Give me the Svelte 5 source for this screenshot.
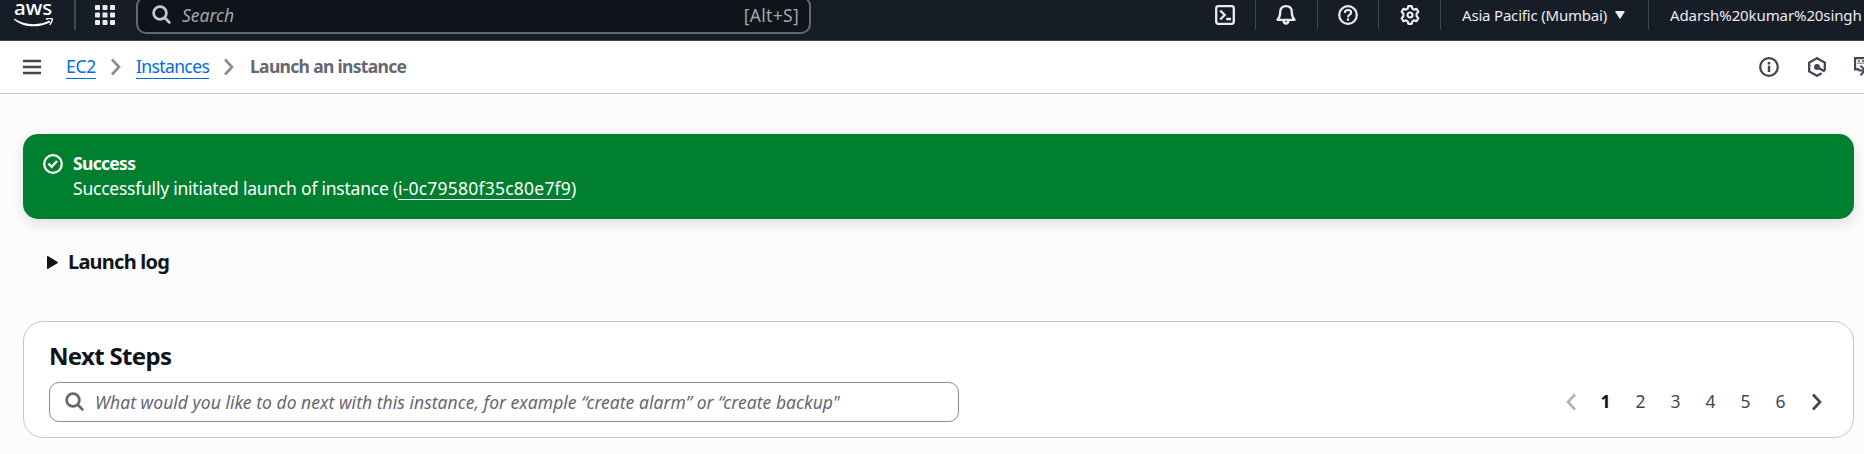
<script>
  const pages = [1, 2, 3, 4, 5, 6];
  const dots = [0, 7.5, 15];
</script>

{#snippet magnifier()}
  <svg class="magnifier" width="20" height="20" viewBox="0 0 20 20" fill="none" stroke="currentColor" stroke-width="2.7">
    <circle cx="8" cy="8" r="6.4" /><path d="M12.5 12.5 18.2 18.2" />
  </svg>
{/snippet}

{#snippet chevron()}
  <svg width="10" height="18" viewBox="0 0 10 18" fill="none" stroke="currentColor" stroke-width="2.7"><path d="M1 1.5 8 9 1 16.5" /></svg>
{/snippet}

<header>
  <div class="topnav">
    <div class="logo">
      <span>aws</span>
      <svg width="40" height="10" viewBox="0 0 40 10" fill="none" stroke="#fff">
        <path d="M.4.6C10 7.4 25 7.9 35.6 2.6L36.2 4.2C25 10.4 9 9.8 0 1.4Z" fill="#fff" stroke="none" />
        <path d="M32 1.2C35 .2 37.6.2 38.1 1 38.4 2.3 37.5 4.8 35.8 6.8" stroke-width="1.5" />
      </svg>
    </div>
    <div class="apps">
      <svg width="20" height="20" viewBox="0 0 20 20" fill="#ebebf0">
        {#each dots as y}{#each dots as x}<rect {x} {y} width="5" height="5" rx=".8" />{/each}{/each}
      </svg>
    </div>
    <div class="search">
      {@render magnifier()}
      <span class="hint">Search</span>
      <span class="keys">[Alt+S]</span>
    </div>
    <nav class="tools">
      <div class="tool">
        <svg width="20" height="20" viewBox="0 0 20 20" fill="none" stroke="#ebebf0" stroke-width="2.3">
          <rect x="1.2" y="1.2" width="17.6" height="17.6" rx="2.2" /><path d="M5.2 5.5 9.7 10 5.2 14.5M11.2 14H16" />
        </svg>
      </div>
      <div class="tool">
        <svg width="20" height="20" viewBox="0 0 20 20" fill="none" stroke="#ebebf0" stroke-width="2.3" stroke-linejoin="round">
          <path d="M1.5 14.8C3.7 12.5 4.2 10.5 4.2 7 4.2 3.2 6.5 1.2 10 1.2S15.8 3.2 15.8 7C15.8 10.5 16.3 12.5 18.5 14.8Z" />
          <path d="M6.4 15.5H13.6C13.4 18.4 12 19.8 10 19.8S6.6 18.4 6.4 15.5Z" fill="#ebebf0" stroke="none" />
          <circle cx="10" cy="16.4" r=".8" fill="#161d26" stroke="none" />
        </svg>
      </div>
      <div class="tool">
        <svg width="20" height="20" viewBox="0 0 20 20" fill="none" stroke="#ebebf0" stroke-width="2.2">
          <circle cx="10" cy="10" r="8.8" /><path d="M6.8 8C6.8 6.1 8 5 10 5S13.2 6.1 13.2 7.7C13.2 9.7 10 9.7 10 12.2" stroke-width="2" /><path d="M10 13.4V15.7" />
        </svg>
      </div>
      <div class="tool">
        <svg width="20" height="20" viewBox="0 0 20 20" fill="none" stroke="#ebebf0" stroke-width="2.2" stroke-linejoin="round">
          <path d="M8.3 1.2H11.7L12.3 3.6 14 4.6 16.5 3.8 18.3 6.8 16.6 8.7V11.3L18.3 13.2 16.5 16.2 14 15.4 12.3 16.4 11.7 18.8H8.3L7.7 16.4 6 15.4 3.5 16.2 1.7 13.2 3.4 11.3V8.7L1.7 6.8 3.5 3.8 6 4.6 7.7 3.6Z" /><circle cx="10" cy="10" r="2.5" />
        </svg>
      </div>
      <div class="region">
        <span>Asia Pacific (Mumbai)</span>
        <svg width="10" height="8" viewBox="0 0 10 8"><path d="M.8 0H9.2Q10 .2 9.6 1L5.5 7.4Q5 8 4.5 7.4L.4 1Q0 .2.8 0Z" fill="#ebebf0" /></svg>
      </div>
      <div class="account">Adarsh%20kumar%20singh</div>
    </nav>
  </div>
</header>

<div class="crumbs">
  <svg class="menu" width="18" height="16" viewBox="0 0 18 16" stroke="#424650" stroke-width="2.4"><path d="M0 2H18M0 8H18M0 14H18" /></svg>
  <a class="ec2" href="#ec2">EC2</a>
  <i class="sep">{@render chevron()}</i>
  <a class="instances" href="#instances">Instances</a>
  <i class="sep">{@render chevron()}</i>
  <b>Launch an instance</b>
  <div class="panels">
    <svg width="20" height="20" viewBox="0 0 20 20" fill="none" stroke="#424650" stroke-width="2.3"><circle cx="10" cy="10" r="8.8" /><path d="M10 8.7V15M10 5V7.4" stroke-width="2.5" /></svg>
    <svg width="20" height="20" viewBox="0 0 20 20" fill="none" stroke="#424650" stroke-width="2.3">
      <path d="M14.7 16.2 10 18.8 2.2 14.4V5.6L10 1.2 17.8 5.6V13.6" /><circle cx="10" cy="10" r="3" fill="#424650" stroke="none" /><path d="M10 10 17.8 14.5" />
    </svg>
    <svg width="20" height="20" viewBox="0 0 20 20" fill="none" stroke="#424650" stroke-width="2.2">
      <path d="M5.5 12.4H1.1V1.1H18.9V9" /><path d="M4 4H6M8 4H10" stroke-width="1.6" /><path d="M3 6.2H17" stroke-width=".8" /><path d="M4.5 13.4H11M6.5 8.6 11.2 13.4 6.5 18.2" stroke-width="2" />
    </svg>
  </div>
</div>

<main>
  <section class="flash">
    <svg width="20" height="20" viewBox="0 0 20 20" fill="none" stroke="#fff" stroke-width="2.3"><circle cx="10" cy="10" r="8.8" /><path d="M5.4 9.6 8.8 12.8 14 7" /></svg>
    <div>
      <strong>Success</strong>
      <p>Successfully initiated launch of instance (<a href="#instance">i-0c79580f35c80e7f9</a>)</p>
    </div>
  </section>

  <div class="log">
    <svg width="11" height="13" viewBox="0 0 11 13"><path d="M0 .8Q.2-.3 1.2.2L10.4 5.8Q11.2 6.5 10.4 7.2L1.2 12.8Q.2 13.3 0 12.2Z" fill="#0f141a" /></svg>
    <strong>Launch log</strong>
  </div>

  <section class="card">
    <h2>Next Steps</h2>
    <div class="row">
      <div class="field">
        {@render magnifier()}
        <span>What would you like to do next with this instance, for example “create alarm” or “create backup"</span>
      </div>
      <div class="pager">
        <i class="prev">{@render chevron()}</i>
        {#each pages as p}<span class:current={p === 1}>{p}</span>{/each}
        <i class="next">{@render chevron()}</i>
      </div>
    </div>
  </section>
</main>

<style>
  :global(body) { background: #fcfcfd; overflow: hidden; }
  :global(#app) { width: 1864px; height: 454px; overflow: hidden; font: 17.5px/25px "Noto Sans", sans-serif; color: #0f141a; }
  svg { display: block; flex: none; }
  header { height: 41px; box-sizing: border-box; overflow: hidden; background: #161d26; border-bottom: 1px solid #424650; }
  .topnav { display: flex; align-items: center; height: 50px; margin-top: -10px; white-space: nowrap; }
  .logo { width: 76px; height: 30px; box-sizing: border-box; padding-left: 14px; border-right: 2px solid #424650; }
  .logo span { display: block; height: 19px; font-size: 20.5px; line-height: 15px; letter-spacing: 0; font-weight: 500; color: #fff; }
  .logo svg { margin-top: -1px; }
  .apps { width: 60px; padding-left: 19px; box-sizing: border-box; }
  .search { display: flex; align-items: center; width: 675px; height: 38px; box-sizing: border-box; padding: 0 10px 0 14px; border: 2px solid #656871; border-radius: 10px; background: #0f141a; color: #c6c6cd; }
  .search .hint { margin-left: 10px; font-style: italic; color: #a4a4ad; }
  .keys { margin-left: auto; color: #a4a4ad; letter-spacing: .3px; }
  .tools { display: flex; align-items: center; width: 670px; margin-left: auto; }
  .tool, .region { display: flex; align-items: center; box-sizing: border-box; height: 30px; border-right: 1px solid #424650; }
  .tool { justify-content: center; width: 61.75px; }
  .tool:first-child { padding-left: 1px; }
  .region { width: 208px; padding-left: 21px; gap: 8px; font-size: 15px; color: #ebebf0; letter-spacing: -.19px; }
  .account { padding-left: 21px; font-size: 15px; letter-spacing: -.1px; color: #ebebf0; }
  .crumbs { display: flex; align-items: center; height: 53px; box-sizing: border-box; padding-left: 23px; background: #fff; border-bottom: 1px solid #c6c6cd; white-space: nowrap; overflow: hidden; }
  .crumbs a { height: 23px; line-height: 23px; color: #006ce0; text-decoration: none; border-bottom: 1px solid #006ce0; }
  .ec2 { width: 30px; margin-left: 25px; letter-spacing: -.3px; }
  .instances { width: 73px; letter-spacing: -.62px; }
  .sep { width: 10px; margin: 0 15px; color: #8c8c94; }
  .crumbs b { margin-left: 1px; line-height: 23px; padding-bottom: 2px; color: #656871; letter-spacing: -.69px; }
  .panels { display: flex; gap: 28px; width: 105px; margin-left: auto; }
  .panels svg:last-child { margin-left: -1px; }
  main { padding: 40px 10px 0 23px; }
  .flash { display: flex; height: 85px; box-sizing: border-box; padding: 17px 20px; border-radius: 15px; background: #00802f; color: #fff; box-shadow: 0 5px 14px rgba(15, 20, 26, .12); }
  .flash > svg { margin-top: 3px; }
  .flash > div { margin-left: 10px; }
  .flash strong { display: block; letter-spacing: -.68px; }
  .flash p { margin: 0; letter-spacing: -.23px; }
  .flash a { color: #fff; text-decoration: none; border-bottom: 1px solid #fff; letter-spacing: .22px; display: inline-block; height: 23px; }
  .log { display: flex; align-items: center; height: 25px; margin: 31px 0 0 24px; font-size: 20px; letter-spacing: -.77px; }
  .log strong { margin-left: 10px; line-height: 23px; padding-bottom: 2px; }
  .card { height: 117px; margin-top: 46px; box-sizing: border-box; padding: 18px 25px; border: 1px solid #c6c6cd; border-radius: 20px; background: #fff; }
  h2 { margin: 0; height: 42px; font-size: 24px; line-height: 32px; letter-spacing: -.68px; }
  .row { display: flex; align-items: center; justify-content: space-between; }
  .field { display: flex; align-items: center; width: 910px; height: 40px; box-sizing: border-box; padding-left: 15px; border: 1px solid #8c8c94; border-radius: 10px; color: #656871; white-space: nowrap; }
  .field span { margin-left: 10px; font-style: italic; letter-spacing: .03px; }
  .pager { display: flex; align-items: center; width: 262px; color: #424650; }
  .pager span { width: 35px; text-align: center; line-height: 23px; padding-bottom: 2px; }
  .pager .current { font-weight: 700; color: #0f141a; }
  .prev { width: 22px; color: #b4b4bb; }
  .prev :global(svg) { transform: scaleX(-1); }
  .next { margin-left: 13.5px; }
</style>
